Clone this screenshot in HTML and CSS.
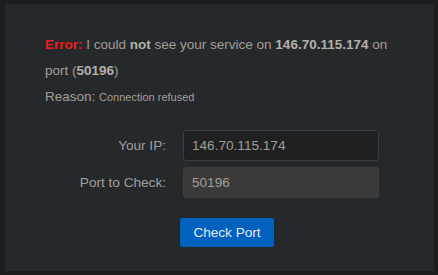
FILE: index.html
```html
<!DOCTYPE html>
<html>
<head>
<meta charset="utf-8">
<link rel="stylesheet" href="styles.css">
</head>
<body>
<div class="panel">
  <p class="msg"><span class="err">Error:</span> I could <b>not</b> see your service on <b>146.70.115.174</b> on port (<b>50196</b>)</p>
  <p class="reason">Reason: <span class="small">Connection refused</span></p>
  <div class="form">
    <label class="lbl">Your IP:</label>
    <div class="field">146.70.115.174</div>
    <label class="lbl">Port to Check:</label>
    <div class="field ro">50196</div>
  </div>
  <div class="actions"><button class="btn">Check Port</button></div>
</div>
</body>
</html>
```
FILE: styles.css
```css
html, body { margin: 0; padding: 0; }
body {
  background: #1c1d1f;
  padding: 4px 4px 4px 5px;
  height: 275px;
  box-sizing: border-box;
  font-family: "Liberation Sans", Arial, sans-serif;
  color: #a19e97;
}
.panel {
  background: #26292c;
  height: 267px;
  box-sizing: border-box;
  padding: 28px 38px 0 40px;
}
.msg {
  margin: 0;
  font-size: 13.5px;
  line-height: 26px;
}
.msg b { color: #b3b0a8; }
.err { color: #ea1f1f; font-weight: bold; }
.reason {
  margin: 0;
  font-size: 13.5px;
  line-height: 26px;
}
.small { font-size: 11px; }
.form {
  display: grid;
  grid-template-columns: 121px 196px;
  column-gap: 17px;
  row-gap: 6px;
  margin-top: 20px;
  align-items: center;
}
.lbl {
  text-align: right;
  font-size: 13.6px;
}
.field {
  height: 31px;
  box-sizing: border-box;
  border: 1px solid #3b3e42;
  border-radius: 3px;
  background: #1f2022;
  padding: 0 8px;
  font-size: 13.6px;
  line-height: 29px;
  color: #a19e97;
}
.field.ro { background: #3a3a3a; }
.actions {
  margin-top: 20px;
  padding-left: 135px;
}
.btn {
  font-family: "Liberation Sans", Arial, sans-serif;
  font-size: 13.6px;
  color: #e3e8ef;
  background: #0061bf;
  border: none;
  border-radius: 2px;
  width: 94px;
  height: 29px;
  padding: 0;
}
```
